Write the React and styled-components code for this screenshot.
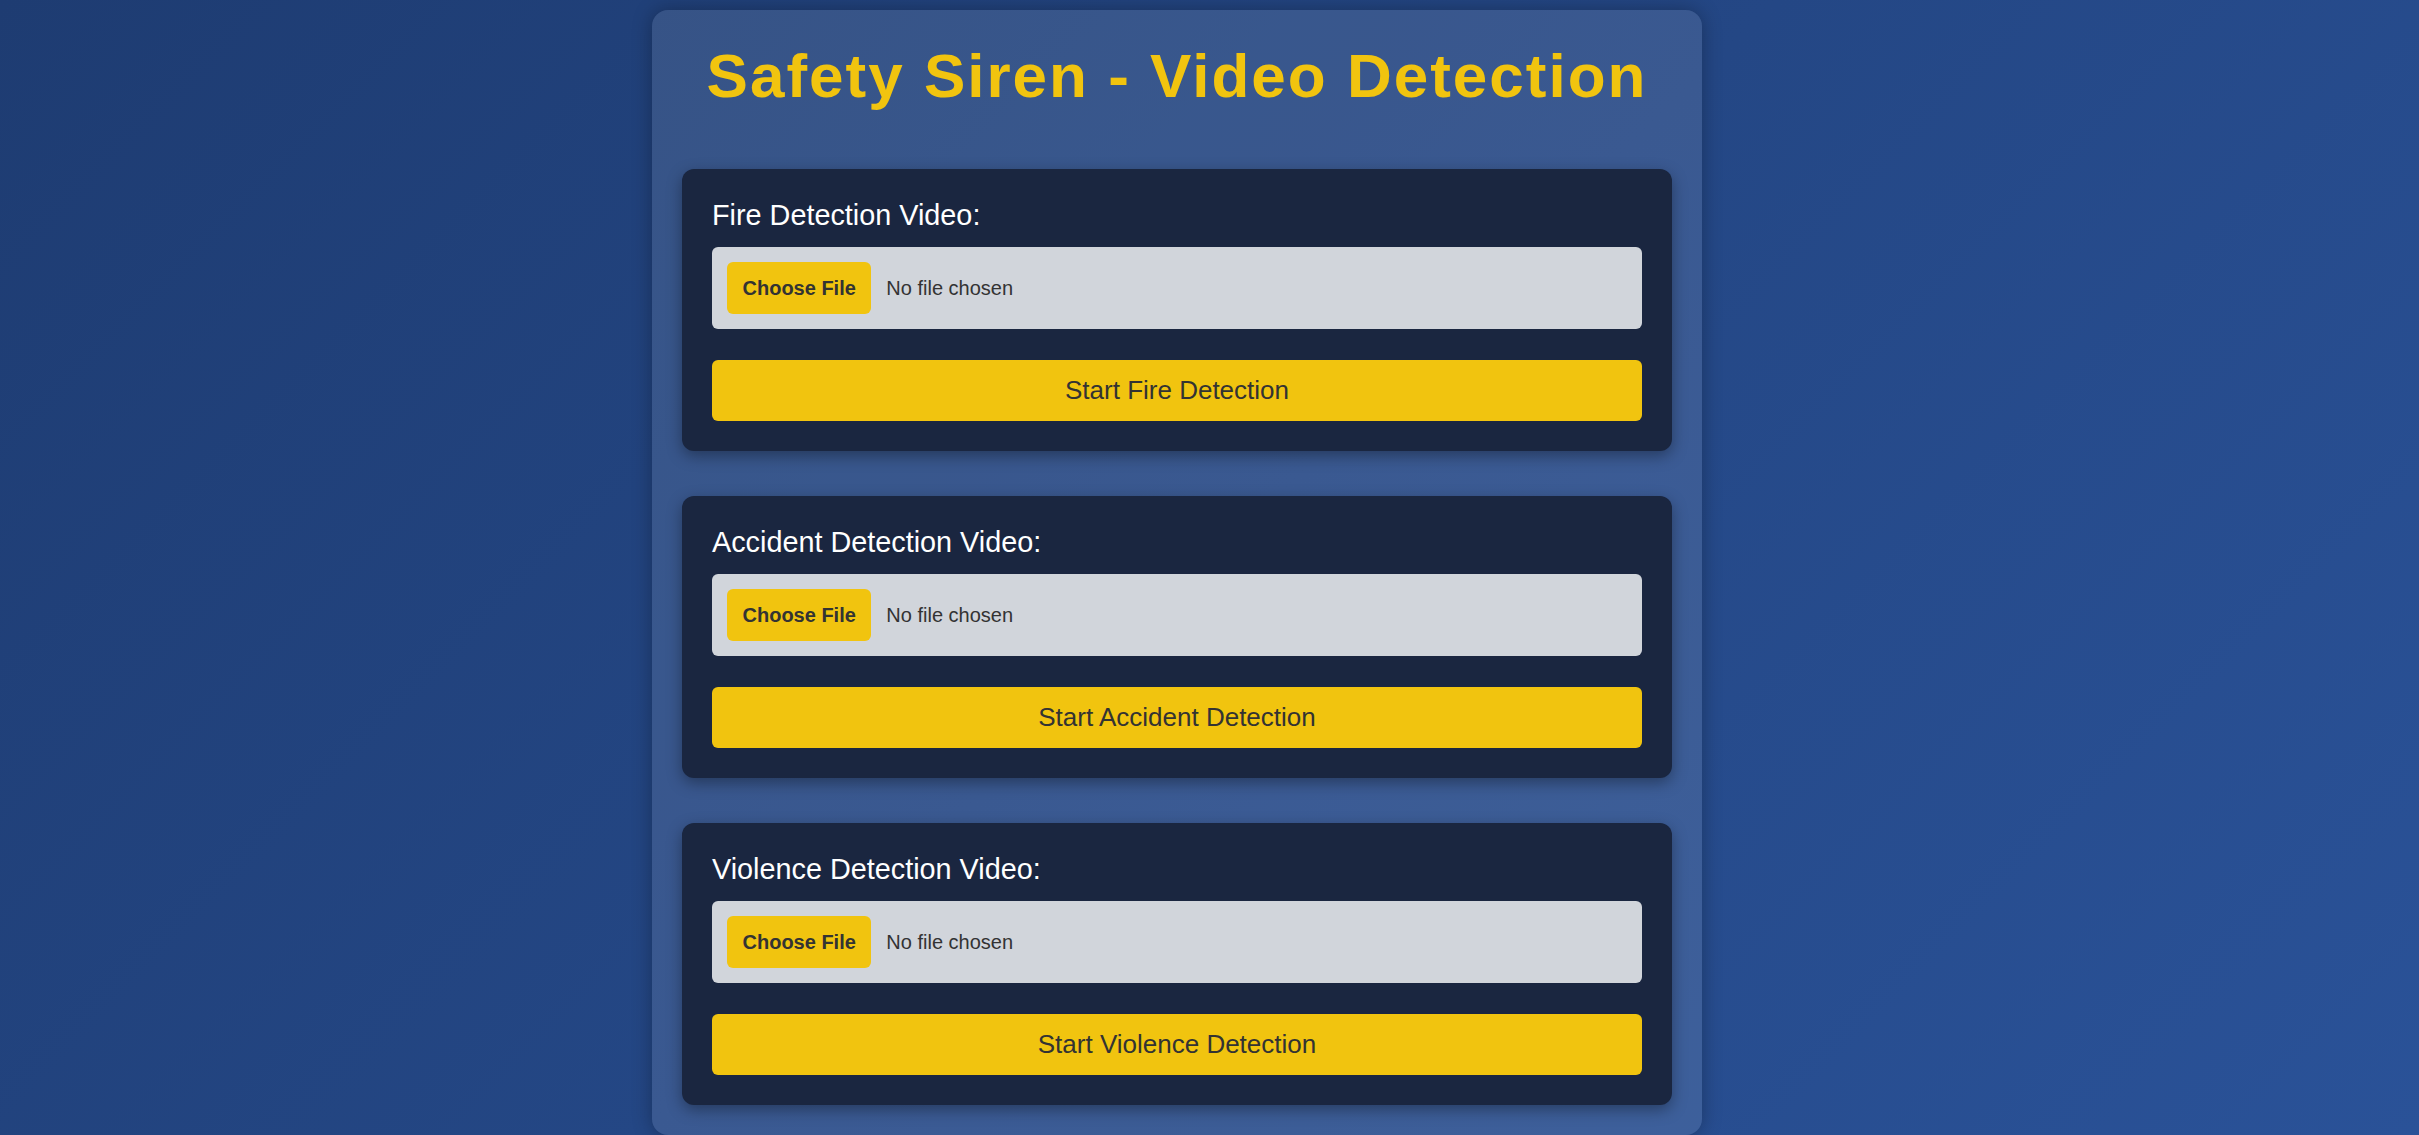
import React from "react";
import styled, { createGlobalStyle } from "styled-components";

const GlobalStyle = createGlobalStyle`
  html, body {
    margin: 0;
    min-height: 100%;
  }
  body {
    min-height: 100vh;
    background: linear-gradient(135deg, #1e3c72 0%, #2a5298 100%);
    font-family: "Liberation Sans", Arial, sans-serif;
  }
`;

const Page = styled.div`
  padding-top: 10px;
`;

const Panel = styled.main`
  box-sizing: border-box;
  width: 1050px;
  margin-left: 652px;
  padding: 30px;
  background: rgba(255, 255, 255, 0.1);
  border-radius: 16px;
  box-shadow: 0 0 20px rgba(0, 0, 0, 0.3);
`;

const Title = styled.h1`
  margin: 0 0 58px;
  font-size: 62px;
  font-weight: bold;
  letter-spacing: 2px;
  text-align: center;
  color: #f1c40f;
`;

const Card = styled.section`
  display: flex;
  flex-direction: column;
  padding: 30px;
  margin-bottom: 45px;
  background: #1a2640;
  border-radius: 12px;
  box-shadow: 0 5px 15px rgba(0, 0, 0, 0.35);

  &:last-child {
    margin-bottom: 0;
  }
`;

const Label = styled.div`
  margin-bottom: 15px;
  font-size: 28.8px;
  color: #ffffff;
`;

const FileBox = styled.label`
  display: flex;
  align-items: center;
  gap: 15px;
  padding: 15px;
  margin-bottom: 31px;
  background: #d1d5db;
  border-radius: 6px;
  cursor: pointer;

  input {
    display: none;
  }
`;

const ChooseButton = styled.span`
  display: flex;
  align-items: center;
  height: 52px;
  padding: 0 15.5px;
  background: #f1c40f;
  border-radius: 6px;
  font-size: 20px;
  font-weight: bold;
  color: #333333;
`;

const FileName = styled.span`
  font-size: 20px;
  color: #333333;
`;

const StartButton = styled.button`
  width: 100%;
  height: 61px;
  padding: 0;
  border: none;
  border-radius: 6px;
  background: #f1c40f;
  font-family: inherit;
  font-size: 26px;
  color: #333333;
  cursor: pointer;
`;

const detectors = [
  { id: "fire", name: "Fire" },
  { id: "accident", name: "Accident" },
  { id: "violence", name: "Violence" },
];

function DetectionCard({ id, name }) {
  const [file, setFile] = React.useState(null);

  return (
    <Card>
      <Label>{name} Detection Video:</Label>
      <FileBox>
        <input
          type="file"
          accept="video/*"
          id={id + "-video"}
          onChange={(e) => setFile(e.target.files[0] || null)}
        />
        <ChooseButton>Choose File</ChooseButton>
        <FileName>{file ? file.name : "No file chosen"}</FileName>
      </FileBox>
      <StartButton type="button">Start {name} Detection</StartButton>
    </Card>
  );
}

export default function App() {
  return (
    <>
      <GlobalStyle />
      <Page>
        <Panel>
          <Title>Safety Siren - Video Detection</Title>
          {detectors.map((d) => (
            <DetectionCard key={d.id} {...d} />
          ))}
        </Panel>
      </Page>
    </>
  );
}
